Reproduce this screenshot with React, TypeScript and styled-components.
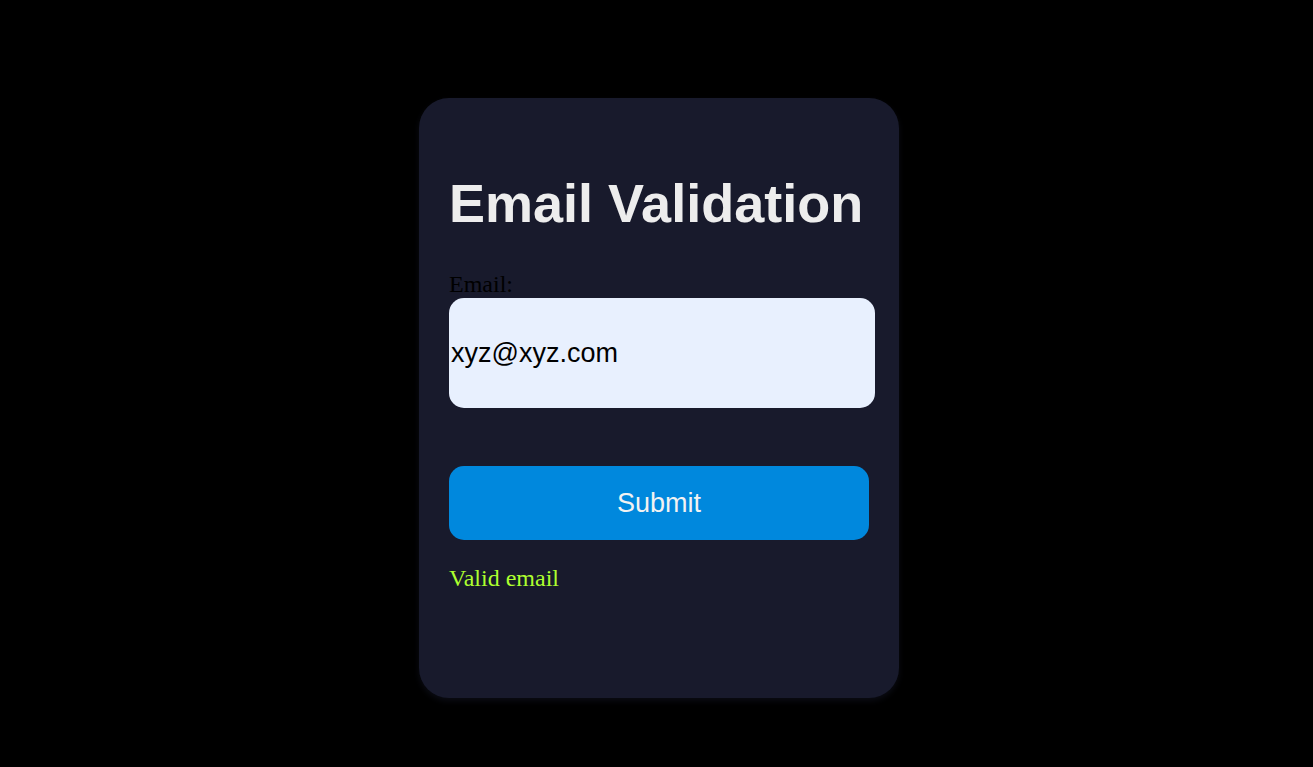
import React, { useState } from "react";
import styled, { createGlobalStyle } from "styled-components";

const GlobalStyle = createGlobalStyle`
  html, body {
    margin: 0;
    padding: 0;
    background: #000000;
  }
  body {
    font-family: "Liberation Serif", "Times New Roman", serif;
  }
`;

const Page = styled.div`
  min-height: 767px;
  display: flex;
  justify-content: center;
  align-items: flex-start;
  padding: 98px 0 0 5px;
  box-sizing: border-box;
  background: #000000;
`;

const Card = styled.form`
  width: 480px;
  height: 600px;
  box-sizing: border-box;
  padding: 40px 30px;
  background: #181a2c;
  border-radius: 30px;
  box-shadow: 0 3px 6px rgba(24, 26, 44, 0.45);
  display: flex;
  flex-direction: column;
`;

const Title = styled.h1`
  margin: 0 0 37px;
  padding-top: 35px;
  font-family: "Liberation Sans", Arial, sans-serif;
  font-weight: 700;
  font-size: 54px;
  line-height: 61px;
  color: #ededed;
  white-space: nowrap;
`;

const Label = styled.label`
  display: block;
  font-family: "Liberation Serif", "Times New Roman", serif;
  font-size: 24px;
  line-height: 27px;
  color: #000000;
`;

const Input = styled.input`
  width: 426px;
  height: 110px;
  box-sizing: border-box;
  border: none;
  outline: none;
  border-radius: 15px;
  padding: 0 2px;
  background: #e8f0fe;
  font-family: "Liberation Sans", Arial, sans-serif;
  font-size: 27px;
  color: #000000;
`;

const Button = styled.button`
  margin-top: 58px;
  width: 420px;
  height: 74px;
  border: none;
  border-radius: 15px;
  background: #0088dd;
  color: #f2f2f2;
  font-family: "Liberation Sans", Arial, sans-serif;
  font-size: 27px;
  cursor: pointer;
`;

const Status = styled.p<{ $valid: boolean }>`
  margin: 25px 0 0;
  font-family: "Liberation Serif", "Times New Roman", serif;
  font-size: 24px;
  line-height: 27px;
  color: ${(p) => (p.$valid ? "#adff2f" : "#ff5c5c")};
`;

export default function App() {
  const [email, setEmail] = useState("xyz@xyz.com");
  const [valid, setValid] = useState(true);

  const onSubmit = (e: React.FormEvent) => {
    e.preventDefault();
    setValid(/^[^\s@]+@[^\s@]+\.[^\s@]+$/.test(email));
  };

  return (
    <>
      <GlobalStyle />
      <Page>
        <Card onSubmit={onSubmit}>
          <Title>Email Validation</Title>
          <Label htmlFor="email">Email:</Label>
          <Input
            id="email"
            type="text"
            value={email}
            onChange={(e) => setEmail(e.target.value)}
          />
          <Button type="submit">Submit</Button>
          <Status $valid={valid}>{valid ? "Valid email" : "Invalid email"}</Status>
        </Card>
      </Page>
    </>
  );
}
